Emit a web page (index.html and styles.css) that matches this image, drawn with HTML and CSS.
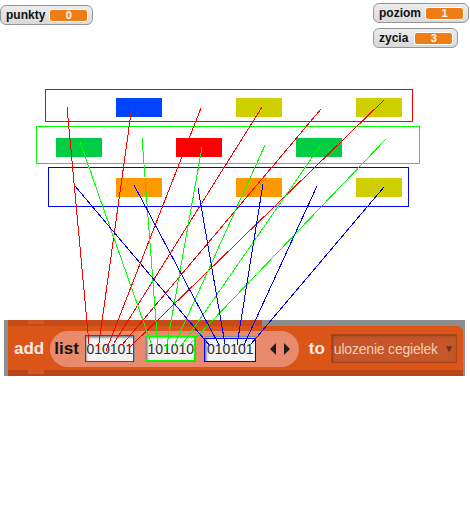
FILE: index.html
```html
<!DOCTYPE html>
<html lang="pl">
<head>
	<meta charset="UTF-8">
	<title>Cegielki</title>
	<link rel="stylesheet" href="styles.css">
</head>
<body>
	<div class="stage">
		<header class="monitors">
			<div class="monitor monitor-left">
				<span class="mon-label">punkty</span>
				<span class="mon-value">0</span>
			</div>
			<div class="monitor-col">
				<div class="monitor">
					<span class="mon-label">poziom</span>
					<span class="mon-value">1</span>
				</div>
				<div class="monitor">
					<span class="mon-label">zycia</span>
					<span class="mon-value">3</span>
				</div>
			</div>
		</header>

		<div class="block-wrap">
			<div class="block-cap"><span class="notch"></span></div>
			<div class="block-body">
				<span class="kw">add</span>
				<div class="list-pill">
					<span class="kw kw-dark">list</span>
					<span class="slot slot-1">010101</span>
					<span class="slot slot-2">101010</span>
					<span class="slot slot-3">010101</span>
					<svg class="arrows" width="22" height="14" viewBox="0 0 22 14">
						<polygon points="7,1 7,13 1,7" fill="#1e1e1e"/>
						<polygon points="15,1 15,13 21,7" fill="#1e1e1e"/>
					</svg>
				</div>
				<span class="kw kw-to">to</span>
				<div class="dropdown">
					<span class="dd-text">ulozenie cegielek</span>
					<span class="caret">&#9660;</span>
				</div>
			</div>
			<div class="block-foot"><span class="notch"></span></div>
		</div>

		<!-- plansza: ramki, cegielki i linie -->
		<svg class="diagram" width="470" height="512" viewBox="0 0 470 512">
			<g fill="none" stroke-width="1" shape-rendering="crispEdges">
				<rect x="45.5" y="89.5" width="367" height="32" stroke="#ff0000"/>
				<rect x="36.5" y="126.5" width="383" height="37" stroke="#00ff00"/>
				<rect x="48.5" y="167.5" width="360" height="39" stroke="#0000ff"/>
			</g>
			<g shape-rendering="crispEdges">
				<rect x="116" y="98" width="46" height="19" fill="#0044ff"/>
				<rect x="236" y="98" width="46" height="19" fill="#cfcf00"/>
				<rect x="356" y="98" width="46" height="19" fill="#cfcf00"/>
				<rect x="56" y="138" width="46" height="19" fill="#00cc44"/>
				<rect x="176" y="138" width="46" height="19" fill="#ff0000"/>
				<rect x="296" y="138" width="46" height="19" fill="#00cc44"/>
				<rect x="116" y="178" width="46" height="19" fill="#ff9900"/>
				<rect x="236" y="178" width="46" height="19" fill="#ff9900"/>
				<rect x="356" y="178" width="46" height="19" fill="#cfcf00"/>
			</g>
			<g stroke="#ff0000" stroke-width="1" shape-rendering="crispEdges">
				<line x1="67" y1="107" x2="89" y2="344"/>
				<line x1="132" y1="106" x2="98" y2="350"/>
				<line x1="201" y1="108" x2="106" y2="351"/>
				<line x1="262" y1="107" x2="114" y2="343"/>
				<line x1="321" y1="109" x2="122" y2="345"/>
				<line x1="384" y1="100" x2="130" y2="347"/>
			</g>
			<g stroke="#00ff00" stroke-width="1" shape-rendering="crispEdges">
				<line x1="80" y1="142" x2="151" y2="343"/>
				<line x1="142" y1="138" x2="158" y2="348"/>
				<line x1="202" y1="147" x2="166" y2="350"/>
				<line x1="265" y1="145" x2="174" y2="346"/>
				<line x1="320" y1="146" x2="182" y2="345"/>
				<line x1="386" y1="139" x2="190" y2="344"/>
			</g>
			<g stroke="#0000ff" stroke-width="1" shape-rendering="crispEdges">
				<line x1="75" y1="186" x2="210" y2="346"/>
				<line x1="134" y1="185" x2="219" y2="345"/>
				<line x1="198" y1="188" x2="225" y2="344"/>
				<line x1="263" y1="184" x2="237" y2="345"/>
				<line x1="317" y1="186" x2="244" y2="345"/>
				<line x1="384" y1="187" x2="251" y2="344"/>
			</g>
			<g fill="none" stroke-width="1" shape-rendering="crispEdges">
				<rect x="85.5" y="335.5" width="48" height="26" stroke="#ff0000"/>
				<rect x="145.5" y="336.5" width="49" height="24" stroke="#00ff00"/>
				<rect x="204.5" y="338.5" width="51" height="23" stroke="#0000ff"/>
			</g>
		</svg>
	</div>
</body>
</html>
```

FILE: styles.css
```css
* {
	box-sizing: border-box;
	margin: 0;
	padding: 0;
}

body {
	background: #ffffff;
	font-family: "Liberation Sans", Arial, sans-serif;
}

.stage {
	position: relative;
	width: 470px;
	height: 512px;
	overflow: hidden;
}

/* monitory zmiennych */
.monitors {
	display: flex;
	justify-content: space-between;
	align-items: flex-start;
	height: 48px;
}

.monitor {
	display: flex;
	align-items: center;
	height: 20px;
	padding: 0 4px 0 5px;
	border: 1px solid #959595;
	border-radius: 6px;
	background: linear-gradient(#ececec, #d9d9d9);
}

.monitor-left {
	margin-top: 5px;
}

.monitor-col {
	display: flex;
	flex-direction: column;
	align-items: flex-start;
	gap: 5px;
	width: 93px;
	margin: 3px 4px 0 0;
}

.mon-label {
	font-size: 12px;
	font-weight: bold;
	color: #111;
}

.mon-value {
	width: 39px;
	height: 13px;
	margin-left: 4px;
	border: 1px solid #ffffff;
	border-radius: 3px;
	background: #ee7d16;
	color: #ffffff;
	font-size: 11px;
	font-weight: bold;
	line-height: 11px;
	text-align: center;
}

.monitor-col .monitor:last-child .mon-value {
	margin-left: 6px;
}

/* klocek "add list ... to" */
.block-wrap {
	width: 461px;
	height: 56px;
	margin: 272px 0 0 4px;
	padding: 0 2px 0 4px;
	background: #8e8e8e;
}

.block-cap {
	position: relative;
	width: 254px;
	height: 6px;
	background: #c64b18;
}

.block-foot {
	position: relative;
	height: 6px;
	background: #b9441a;
}

.notch {
	position: absolute;
	left: 20px;
	top: 0;
	width: 16px;
	height: 4px;
	background: #d6561f;
}

.block-body {
	display: flex;
	align-items: center;
	height: 44px;
	padding: 1px 0 0 6px;
	background: #db5519;
	border-radius: 0 6px 0 0;
}

.kw {
	font-size: 17px;
	font-weight: bold;
	color: #fbe9e0;
}

.kw-dark {
	color: #151515;
}

.kw-to {
	margin-left: 10px;
}

.list-pill {
	display: flex;
	align-items: center;
	flex-shrink: 0;
	height: 36px;
	margin-left: 6px;
	padding: 0 8px 0 4px;
	border-radius: 18px;
	background: #e88a6b;
}

.slot {
	width: 50px;
	height: 26px;
	border: 1px solid #8c8c8c;
	background: #f3f3f3;
	box-shadow: inset 1px 1px 2px rgba(0, 0, 0, 0.35);
	color: #2e2e2e;
	font-size: 14px;
	line-height: 24px;
	text-align: center;
}

.slot-1 {
	margin-left: 6px;
}

.slot-2 {
	margin-left: 11px;
}

.slot-3 {
	margin-left: 9px;
	width: 51px;
}

.arrows {
	margin-left: 13px;
}

.dropdown {
	display: flex;
	align-items: center;
	flex-shrink: 0;
	width: 126px;
	height: 29px;
	margin-left: 6px;
	padding: 0 2px 0 2px;
	border: 1px solid #a8451a;
	background: #c4562a;
	box-shadow: inset 1px 1px 2px rgba(0, 0, 0, 0.3);
	color: #f6cdb6;
	font-size: 14px;
	white-space: nowrap;
}

.dd-text {
	letter-spacing: -0.2px;
}

.caret {
	margin-left: auto;
	color: #6e3420;
	font-size: 10px;
}

.diagram {
	position: absolute;
	top: 0;
	left: 0;
	pointer-events: none;
}
```
